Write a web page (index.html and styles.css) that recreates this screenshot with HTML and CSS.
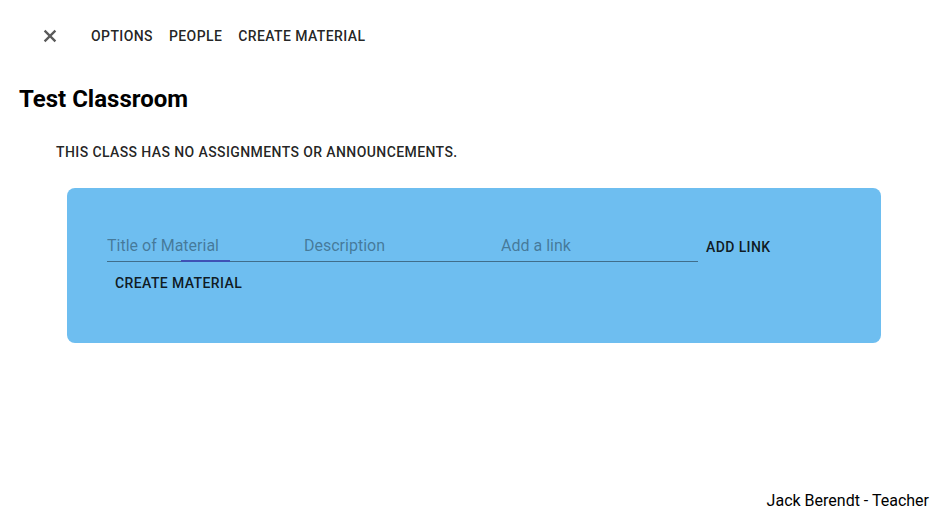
FILE: index.html
```html
<!DOCTYPE html>
<html>
<head>
<meta charset="utf-8">
<link rel="stylesheet" href="styles.css">
</head>
<body>
<div class="page">
  <header class="toolbar">
    <button class="icon-btn" aria-label="close">
      <svg viewBox="0 0 24 24" width="24" height="24"><path d="M6.6 6.6L17.4 17.4M17.4 6.6L6.6 17.4" stroke="currentColor" stroke-width="2.3" fill="none"/></svg>
    </button>
    <nav class="nav">
      <button class="btn">Options</button>
      <button class="btn">People</button>
      <button class="btn">Create Material</button>
    </nav>
  </header>
  <main class="main">
    <h2 class="title">Test Classroom</h2>
    <p class="empty">This class has no assignments or announcements.</p>
    <section class="card">
      <div class="fields">
        <div class="field focused"><input class="input" placeholder="Title of Material"></div>
        <div class="field"><input class="input" placeholder="Description"></div>
        <div class="field"><input class="input" placeholder="Add a link"></div>
        <button class="btn card-btn">Add Link</button>
      </div>
      <div class="actions">
        <button class="btn">Create Material</button>
      </div>
    </section>
  </main>
  <footer class="footer">Jack Berendt - Teacher</footer>
</div>
</body>
</html>
```

FILE: styles.css
```css
* { box-sizing: border-box; }
html, body { margin: 0; padding: 0; }
body {
  font-family: Roboto, "Liberation Sans", sans-serif;
  color: rgba(0,0,0,0.87);
  background: #fff;
  width: 948px;
  height: 531px;
  overflow: hidden;
}
.page {
  height: 531px;
  display: flex;
  flex-direction: column;
}
.toolbar {
  display: flex;
  align-items: center;
  height: 72px;
  padding-left: 38px;
}
.icon-btn {
  width: 24px;
  height: 24px;
  padding: 0;
  border: 0;
  background: none;
  color: #5a5a5a;
  display: flex;
}
.nav {
  display: flex;
  margin-left: 21px;
}
.btn {
  font-family: Roboto, "Liberation Sans", sans-serif;
  font-size: 14px;
  font-weight: 500;
  letter-spacing: 0.4px;
  text-transform: uppercase;
  color: rgba(0,0,0,0.87);
  background: none;
  border: 0;
  padding: 6px 8px;
  min-width: 64px;
  line-height: 24px;
  cursor: pointer;
}
.main {
  flex: 1;
  padding-left: 19px;
}
.title {
  margin: 12px 0 0;
  font-size: 24px;
  font-weight: 700;
  line-height: 30px;
  color: #000;
}
.empty {
  margin: 28px 0 0 37px;
  font-size: 14px;
  font-weight: 500;
  letter-spacing: 0.4px;
  text-transform: uppercase;
  line-height: 20px;
}
.card {
  margin: 26px 0 0 48px;
  width: 814px;
  height: 155px;
  border-radius: 8px;
  background: #6ebef0;
  padding: 42px 0 0 40px;
}
.fields {
  display: flex;
  align-items: flex-start;
  height: 32px;
}
.field {
  width: 197px;
  height: 32px;
  position: relative;
  border-bottom: 1px solid rgba(0,0,0,0.42);
}
.field.focused::after {
  content: "";
  position: absolute;
  left: 74px;
  width: 49px;
  bottom: -1px;
  height: 2px;
  background: #3f51b5;
}
.input {
  width: 100%;
  height: 31px;
  border: 0;
  background: transparent;
  padding: 6px 0 7px;
  font-family: Roboto, "Liberation Sans", sans-serif;
  font-size: 16px;
  color: rgba(0,0,0,0.87);
  outline: none;
}
.input::placeholder {
  color: rgba(0,0,0,0.87);
  opacity: 0.42;
}
.card-btn { margin-top: -1px; }
.actions {
  margin-top: 3px;
}
.footer {
  text-align: right;
  padding: 0 19px 18px 0;
  font-size: 16px;
  line-height: 24px;
  color: #000;
}
```
